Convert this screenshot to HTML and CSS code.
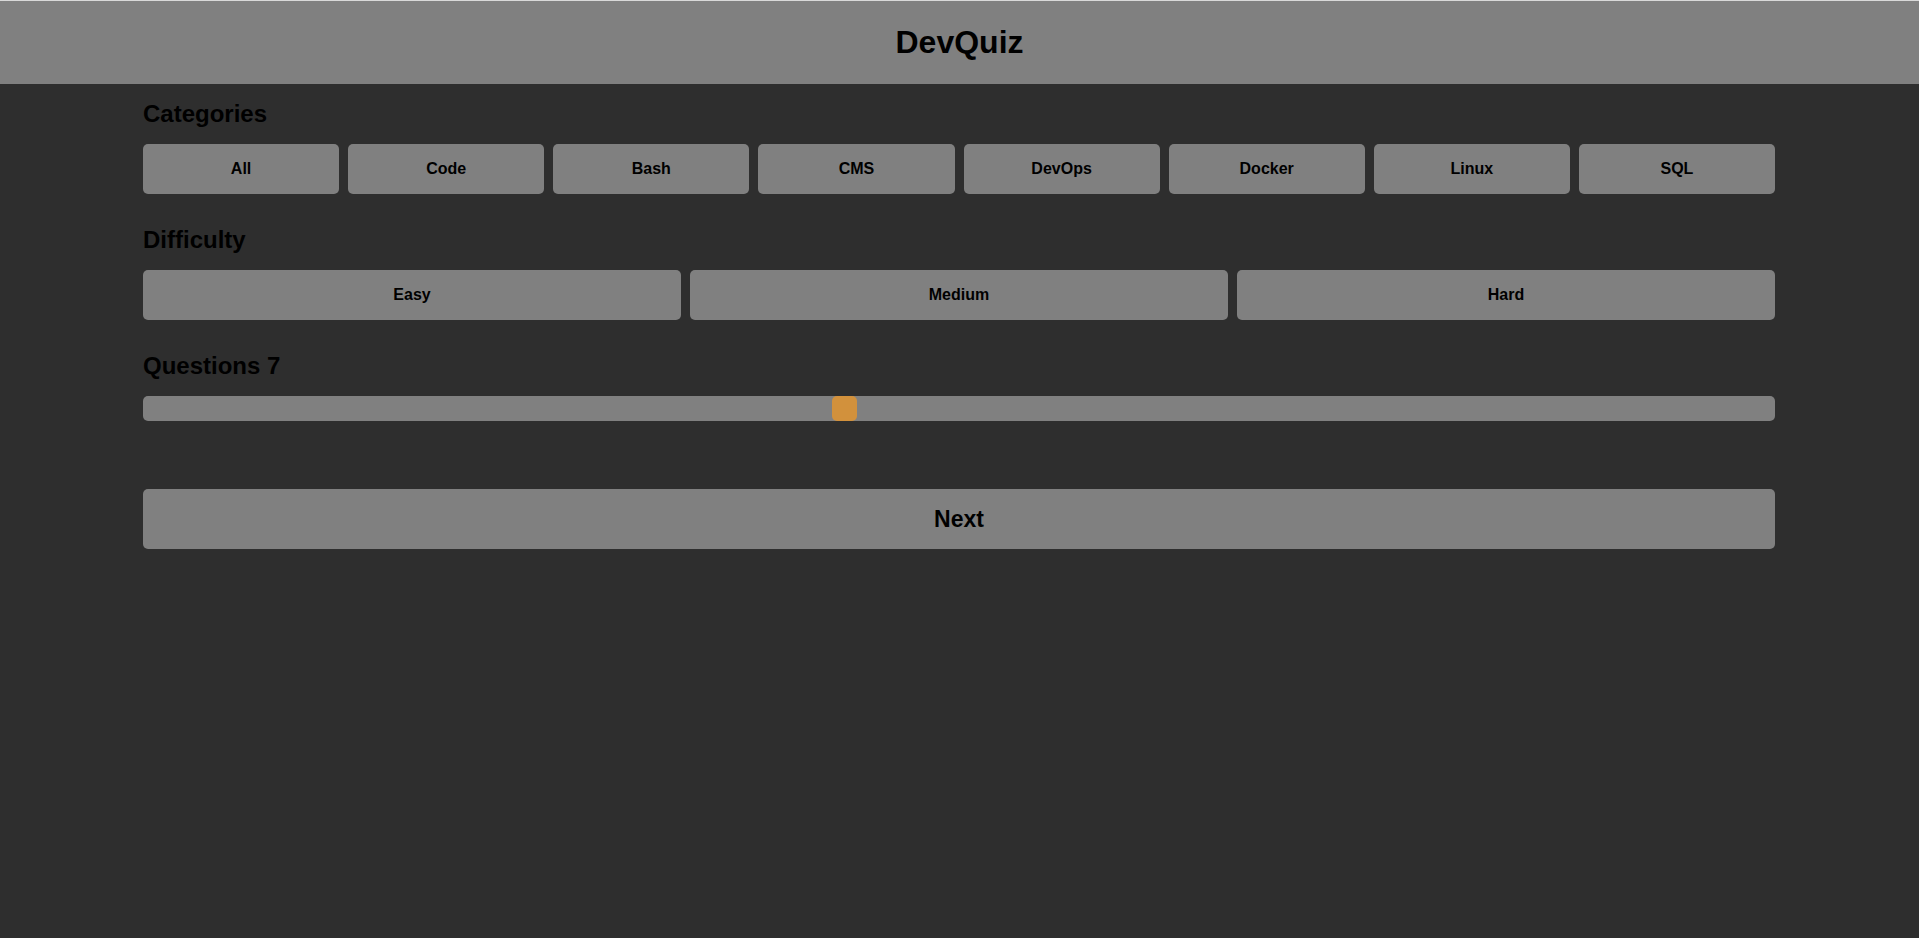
FILE: index.html
```html
<!DOCTYPE html>
<html lang="en">
<head>
<meta charset="utf-8">
<title>DevQuiz</title>
<link rel="stylesheet" href="styles.css">
</head>
<body>
<header class="topbar">
  <h1 class="title">DevQuiz</h1>
</header>
<main class="content">
  <section class="section">
    <h2 class="section-title">Categories</h2>
    <div class="grid grid-8">
      <button class="opt">All</button>
      <button class="opt">Code</button>
      <button class="opt">Bash</button>
      <button class="opt">CMS</button>
      <button class="opt">DevOps</button>
      <button class="opt">Docker</button>
      <button class="opt">Linux</button>
      <button class="opt">SQL</button>
    </div>
  </section>
  <section class="section">
    <h2 class="section-title">Difficulty</h2>
    <div class="grid grid-3">
      <button class="opt">Easy</button>
      <button class="opt">Medium</button>
      <button class="opt">Hard</button>
    </div>
  </section>
  <section class="section">
    <h2 class="section-title">Questions 7</h2>
    <input class="slider" type="range" min="1" max="15" value="7">
  </section>
  <button class="next">Next</button>
</main>
</body>
</html>
```
FILE: styles.css
```css
html, body {
  margin: 0;
  padding: 0;
}
body {
  background: #2e2e2e;
  color: #000;
  font-family: "Liberation Sans", Arial, sans-serif;
}
.topbar {
  border-top: 1px solid #d9d9d9;
  height: 83px;
  background: #808080;
  display: flex;
  align-items: center;
  justify-content: center;
}
.title {
  margin: 0;
  font-size: 32px;
  font-weight: bold;
}
.content {
  margin: 0 144px 0 143px;
}
.section {
  padding: 16px 0;
}
.section-title {
  margin: 0 0 16px;
  font-size: 24px;
  line-height: 28px;
  font-weight: bold;
}
.grid {
  display: grid;
  gap: 9px;
}
.grid-8 {
  grid-template-columns: repeat(8, 1fr);
}
.grid-3 {
  grid-template-columns: repeat(3, 1fr);
}
.opt {
  height: 50px;
  border: none;
  border-radius: 5px;
  background: #808080;
  color: #000;
  font-family: "Liberation Sans", Arial, sans-serif;
  font-size: 16px;
  font-weight: bold;
  padding: 0;
}
.slider {
  -webkit-appearance: none;
  appearance: none;
  display: block;
  margin: 0;
  width: 100%;
  height: 25px;
  background: #808080;
  border-radius: 5px;
  outline: none;
}
.slider::-webkit-slider-thumb {
  -webkit-appearance: none;
  appearance: none;
  width: 25px;
  height: 25px;
  border-radius: 5px;
  background: #d2913c;
  border: none;
}
.slider::-moz-range-thumb {
  width: 25px;
  height: 25px;
  border-radius: 5px;
  background: #d2913c;
  border: none;
}
.next {
  display: block;
  width: 100%;
  height: 60px;
  margin-top: 52px;
  border: none;
  border-radius: 5px;
  background: #808080;
  color: #000;
  font-family: "Liberation Sans", Arial, sans-serif;
  font-size: 23px;
  font-weight: bold;
  padding: 0;
}
```
